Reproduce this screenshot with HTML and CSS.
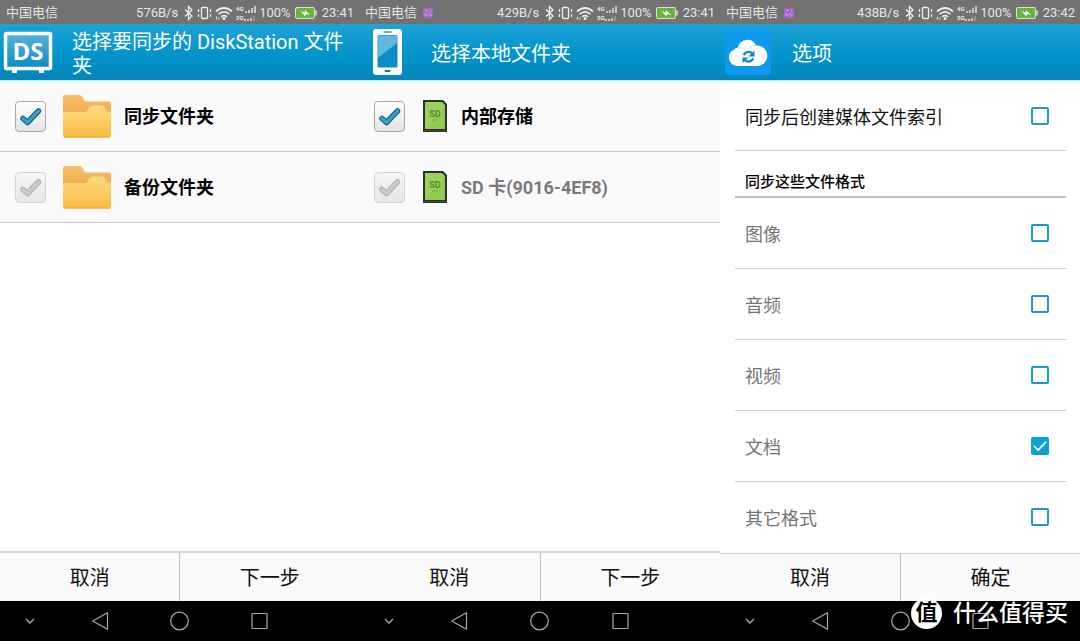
FILE: index.html
```html
<!DOCTYPE html>
<html lang="zh-CN">
<head>
<meta charset="utf-8">
<title>DS cloud</title>
<link rel="stylesheet" href="styles.css">
</head>
<body>
<svg class="defs" aria-hidden="true">
  <defs>
    <linearGradient id="folderBack" x1="0" y1="0" x2="0" y2="1"><stop offset="0" stop-color="#fbc068"/><stop offset="1" stop-color="#e9a648"/></linearGradient>
    <linearGradient id="folderFront" x1="0" y1="0" x2="0" y2="1"><stop offset="0" stop-color="#ffdb80"/><stop offset="1" stop-color="#f8bc42"/></linearGradient>
    <linearGradient id="sdFace" x1="0" y1="0" x2="0" y2="1"><stop offset="0" stop-color="#9bd063"/><stop offset="1" stop-color="#98d455"/></linearGradient>
    <linearGradient id="glass" x1="0" y1="0" x2="0" y2="1"><stop offset="0" stop-color="#5bb2dc"/><stop offset="1" stop-color="#0a8bc4"/></linearGradient>
  </defs>
  <symbol id="status" viewBox="0 0 74 20">
    <path d="M2 6.500 9 13 5.500 16.500V3.500L9 7 2 13.500" fill="none" stroke="#eee" stroke-width="1.300"/>
    <g fill="none" stroke="#eee" stroke-width="1.300"><rect x="18.500" y="4.500" width="6" height="11" rx="1"/><path d="M15.500 6v3M15.500 11v3M27.500 6v3M27.500 11v3"/></g>
    <g fill="none" stroke="#eee" stroke-width="1.700"><path d="M33 8.500Q41 1.500 49 8.500M35.500 11.200Q41 6.500 46.500 11.200M38.100 13.800Q41 11.400 43.900 13.800"/></g>
    <circle cx="41" cy="15.500" r="1.500" fill="#eee"/>
    <path d="M33.500 13.500v3M36 14.500v2" stroke="#ddd" stroke-width="1.200"/>
    <text x="53" y="8" class="tiny">4G</text><text x="53" y="17" class="tiny">2G</text>
    <path d="M63 10V8M66 10V7M69 10V5M72 10V3M62 18v-2M65 18v-2M68 18v-3" stroke="#eee" stroke-width="1.400"/>
    <path d="M71 18v-5" stroke="#aaa" stroke-width="1.200"/>
  </symbol>
  <symbol id="battery" viewBox="0 0 22 12">
    <rect x="0.500" y="0.500" width="19" height="11" rx="1.500" fill="#68b53c" stroke="#ddd"/><path d="M21 3.500v5" stroke="#ddd" stroke-width="1.500"/>
    <path d="M5.500 4 9.500 5.500 10.500 3.500 15 8 11.500 7 10 9Z" fill="#fff"/>
  </symbol>
  <symbol id="badge" viewBox="0 0 12 12">
    <rect x="1" y="1" width="10" height="10" rx="1" fill="#a766c6"/><path d="M3 9V6.500L5 8.500 9 4.500M3 3.500h3M7.500 9H9V7M8 3h1" fill="none" stroke="#dcb7ee" stroke-width="0.800"/>
  </symbol>
  <symbol id="folder" viewBox="0 0 48 44">
    <path d="M0 3Q0 1 2 1H16.500Q18 1 19 2.500L22 7.500H46Q48 7.500 48 9.500V25H0Z" fill="url(#folderBack)"/>
    <path d="M0 18H23L27 12.500Q28 11.500 29 11.500H39Q40.500 11.500 41 12.500L44 17.500H48V41Q48 43.500 46 43.500H2Q0 43.500 0 41Z" fill="url(#folderFront)"/>
    <path d="M1 43H47" stroke="#eda834" stroke-width="1"/>
  </symbol>
  <symbol id="sd" viewBox="0 0 26 44">
    <path d="M1 6H21L25 10V38H1Z" fill="#2b2e2b"/>
    <path d="M3 8H20L23 11V35H3Z" fill="url(#sdFace)"/><path d="M3 35 23 13V35Z" fill="#7fbc42" opacity=".35"/>
    <path d="M2 36.500H24" stroke="#454a45"/>
    <text x="13" y="23" class="sd-text">SD</text><path d="M10 26h6" stroke="#548a2c" stroke-dasharray="1 1"/>
  </symbol>
  <symbol id="tick-on" viewBox="0 0 31 31">
    <path d="M8 17.500 12.500 21.500 23.500 10" fill="none" stroke="#1a6385" stroke-width="5.500" stroke-linecap="round" stroke-linejoin="round"/>
    <path d="M8 17.500 12.500 21.500 23.500 10" fill="none" stroke="#38a0c8" stroke-width="3.200" stroke-linecap="round" stroke-linejoin="round"/>
  </symbol>
  <symbol id="tick-off" viewBox="0 0 31 31">
    <path d="M8 17.500 12.500 21.500 23.500 10" fill="none" stroke="#b0b0b0" stroke-width="5.500" stroke-linecap="round" stroke-linejoin="round"/>
    <path d="M8 17.500 12.500 21.500 23.500 10" fill="none" stroke="#cacaca" stroke-width="3.500" stroke-linecap="round" stroke-linejoin="round"/>
  </symbol>
  <symbol id="n-down" viewBox="0 0 20 20"><path d="M6 8 10 12 14 8" fill="none" stroke="#aaa" stroke-width="1.300"/></symbol>
  <symbol id="n-back" viewBox="0 0 20 20"><path d="M2.700 10 17.500 1.800V18.200Z" fill="none" stroke="#aaa" stroke-width="1.200" stroke-linejoin="round"/></symbol>
  <symbol id="n-home" viewBox="0 0 20 20"><circle cx="10.500" cy="10" r="8.800" fill="none" stroke="#aaa" stroke-width="1.200"/></symbol>
  <symbol id="n-app" viewBox="0 0 20 20"><rect x="3" y="2.500" width="15" height="15" rx="0.500" fill="none" stroke="#aaa" stroke-width="1.200"/></symbol>
</svg>

<main class="screens">
  <section class="screen">
    <div class="statusbar">
      <span>中国电信</span>
      <span class="speed">576B/s</span><svg class="i-status"><use href="#status"/></svg><span class="percent">100%</span><svg class="i-battery"><use href="#battery"/></svg><span>23:41</span>
    </div>
    <header class="titlebar">
      <svg class="logo" viewBox="0 0 56 48">
        <path d="M12 40h5v5h-5ZM39 40h5v5h-5Z" fill="#fff"/>
        <rect x="5.500" y="5.500" width="45" height="35" rx="1" fill="url(#glass)" stroke="#fff" stroke-width="3.500"/>
        <text x="28" y="32" class="ds-text">DS</text>
      </svg>
      <h2>选择要同步的 DiskStation 文件夹</h2>
    </header>
    <div class="content">
      <label class="folder-row"><span class="check"><input type="checkbox" checked><svg><use href="#tick-on"/></svg></span><svg class="i-folder"><use href="#folder"/></svg><span class="name">同步文件夹</span></label>
      <label class="folder-row"><span class="check"><input type="checkbox" class="muted"><svg><use href="#tick-off"/></svg></span><svg class="i-folder"><use href="#folder"/></svg><span class="name">备份文件夹</span></label>
    </div>
    <footer class="actions"><button type="button">取消</button><button type="button">下一步</button></footer>
    <nav class="navbar">
      <button type="button" aria-label="收起"><svg><use href="#n-down"/></svg></button><button type="button" aria-label="返回"><svg><use href="#n-back"/></svg></button><button type="button" aria-label="主屏幕"><svg><use href="#n-home"/></svg></button><button type="button" aria-label="最近任务"><svg><use href="#n-app"/></svg></button>
    </nav>
  </section>

  <section class="screen">
    <div class="statusbar">
      <span>中国电信</span><svg class="i-badge"><use href="#badge"/></svg>
      <span class="speed">429B/s</span><svg class="i-status"><use href="#status"/></svg><span class="percent">100%</span><svg class="i-battery"><use href="#battery"/></svg><span>23:41</span>
    </div>
    <header class="titlebar">
      <svg class="logo" viewBox="0 0 56 48">
        <rect x="14" y="1" width="29" height="46" rx="3" fill="#fff"/><rect x="18.500" y="7" width="20" height="32.500" rx="1.500" fill="#0d8dc6"/>
        <path d="M19 8.500Q19 7.500 20 7.500H37Q38 7.500 38 8.500V15L19 30Z" fill="#62b5dd"/>
        <path d="M25 4h7" stroke="#4b8ca8" stroke-width="1.500" stroke-linecap="round"/><rect x="25.500" y="42" width="6" height="2" rx="1" fill="#27738c"/>
      </svg>
      <h2>选择本地文件夹</h2>
    </header>
    <div class="content">
      <label class="folder-row"><span class="check"><input type="checkbox" checked><svg><use href="#tick-on"/></svg></span><svg class="i-sd"><use href="#sd"/></svg><span class="name">内部存储</span></label>
      <label class="folder-row"><span class="check"><input type="checkbox" class="muted"><svg><use href="#tick-off"/></svg></span><svg class="i-sd"><use href="#sd"/></svg><span class="name dim">SD 卡(9016-4EF8)</span></label>
    </div>
    <footer class="actions"><button type="button">取消</button><button type="button">下一步</button></footer>
    <nav class="navbar">
      <button type="button" aria-label="收起"><svg><use href="#n-down"/></svg></button><button type="button" aria-label="返回"><svg><use href="#n-back"/></svg></button><button type="button" aria-label="主屏幕"><svg><use href="#n-home"/></svg></button><button type="button" aria-label="最近任务"><svg><use href="#n-app"/></svg></button>
    </nav>
  </section>

  <section class="screen">
    <div class="statusbar">
      <span>中国电信</span><svg class="i-badge"><use href="#badge"/></svg>
      <span class="speed">438B/s</span><svg class="i-status"><use href="#status"/></svg><span class="percent">100%</span><svg class="i-battery"><use href="#battery"/></svg><span>23:42</span>
    </div>
    <header class="titlebar">
      <svg class="logo" viewBox="0 0 56 48">
        <rect x="5" y="2" width="46" height="45" rx="3" fill="#0c99ee"/>
        <path d="M17 38A8.500 8.500 0 0 1 13.500 22 7 7 0 0 1 18 19.500 9.500 9.500 0 0 1 36 17.500 9.500 9.500 0 0 1 38 38Z" fill="#fff"/>
        <path d="M18 20A9 9 0 0 1 26 22M29 20Q32 16.500 36.500 17.500" fill="none" stroke="#bfe4fa"/>
        <path d="M23.500 27Q28 21.500 32.500 25.500" fill="none" stroke="#0c86d0" stroke-width="2.200"/><path d="M34.500 22.500V28.500H28.500Z" fill="#0c86d0"/>
        <path d="M33.500 30.500Q29 36 24.500 32" fill="none" stroke="#0c86d0" stroke-width="2.200"/><path d="M22.500 35V29.500H28.500Z" fill="#0c86d0"/>
      </svg>
      <h2>选项</h2>
    </header>
    <div class="content options">
      <label class="option strong"><span class="name">同步后创建媒体文件索引</span><span class="box"><input type="checkbox"></span></label>
      <h3>同步这些文件格式</h3>
      <label class="option"><span class="name">图像</span><span class="box"><input type="checkbox"></span></label>
      <label class="option"><span class="name">音频</span><span class="box"><input type="checkbox"></span></label>
      <label class="option"><span class="name">视频</span><span class="box"><input type="checkbox"></span></label>
      <label class="option"><span class="name">文档</span><span class="box"><input type="checkbox" checked><svg viewBox="0 0 18 18"><path d="M3 9 7.200 13 15 4.800" fill="none" stroke="#fff" stroke-width="1.700"/></svg></span></label>
      <label class="option"><span class="name">其它格式</span><span class="box"><input type="checkbox"></span></label>
    </div>
    <footer class="actions thin"><button type="button">取消</button><button type="button">确定</button></footer>
    <nav class="navbar">
      <button type="button" aria-label="收起"><svg><use href="#n-down"/></svg></button><button type="button" aria-label="返回"><svg><use href="#n-back"/></svg></button><button type="button" aria-label="主屏幕"><svg><use href="#n-home"/></svg></button><button type="button" aria-label="最近任务"><svg><use href="#n-app"/></svg></button>
    </nav>
  </section>
</main>
<div class="watermark"><span class="seal">值</span><span>什么值得买</span></div>
</body>
</html>
```
FILE: styles.css
```css
* { box-sizing: border-box; }
body {
  margin: 0;
  position: relative;
  background: #fff;
  color: #111;
  font-family: Roboto, "Noto Sans CJK SC", sans-serif;
}
svg { display: block; flex: none; }
.defs { position: absolute; width: 0; height: 0; }
h2, h3 { margin: 0; }
button { font: inherit; color: inherit; border: 0; padding: 0; background: none; }

.screens {
  display: grid;
  grid-template-columns: 359fr 361fr 360fr;
  min-height: 100vh;
}
.screen { display: flex; flex-direction: column; min-width: 0; }

.statusbar {
  display: flex;
  align-items: center;
  height: 24px;
  padding: 2px 5px 0 6px;
  background: #727272;
  color: #e6e6e6;
  font-size: 13px;
  line-height: 22px;
  white-space: nowrap;
}
.i-badge { width: 12px; height: 12px; margin-left: 5px; }
.speed { margin-left: auto; }
.i-status { width: 74px; height: 20px; margin-left: 5px; }
.percent { margin-left: 2px; }
.i-battery { width: 22px; height: 12px; margin: 0 5px 0 4px; }
.tiny { font: bold 6px Roboto, sans-serif; fill: #eee; }

.titlebar {
  display: grid;
  grid-template-columns: 56px 1fr;
  column-gap: 16px;
  align-items: center;
  height: 57px;
  border-bottom: 1px solid #b9e5f8;
  background: linear-gradient(#1fa2d8, #0094cb 55%, #0486bb);
  color: #fff;
}
.titlebar h2 { padding-top: 4px; font-size: 20px; font-weight: 400; line-height: 24px; }
.logo { width: 56px; height: 48px; }
.ds-text { font: bold 24px "Open Sans", sans-serif; fill: #fff; text-anchor: middle; }

.content { flex: 1; }
.name { padding-top: 2px; }
.folder-row {
  display: flex;
  align-items: center;
  padding: 13px 15px;
  border-bottom: 1px solid #c8c8c8;
  background: #fafafb;
  color: #000;
  font-size: 18px;
  font-weight: 700;
  line-height: 24px;
}
.check, .box { display: grid; }
.check > *, .box > * { grid-area: 1 / 1; margin: 0; }
.check { margin-right: 17px; }
.check input {
  appearance: none;
  width: 31px;
  height: 31px;
  border: 1px solid #aaa;
  border-radius: 4px;
  background: linear-gradient(#fff, #e3e3e3);
}
.check input.muted { border-color: #d4d4d4; background: linear-gradient(#f6f6f6, #e6e6e6); }
.check svg { width: 31px; height: 31px; pointer-events: none; }
.i-folder { width: 48px; height: 44px; margin-right: 13px; }
.i-sd { width: 26px; height: 44px; margin-right: 13px; }
.sd-text { font: bold 9px Roboto, sans-serif; fill: #548a2c; text-anchor: middle; }
.dim { color: #7a7a7a; }

.options { padding: 0 14px 0 15px; }
.option {
  display: flex;
  align-items: center;
  justify-content: space-between;
  padding: 21px 17px 21px 10px;
  border-bottom: 1px solid #ccc;
  color: #757575;
  font-size: 18px;
  line-height: 24px;
}
.option .name { padding-top: 4px; }
.option:last-child { border-bottom: 0; }
.strong { padding: 21px 17px 20px 10px; color: #111; }
.options h3 {
  padding: 21px 10px 4px;
  border-bottom: 2px solid #c0c0c0;
  color: #000;
  font-size: 15px;
  font-weight: 500;
  line-height: 20px;
}
.box input {
  appearance: none;
  width: 18px;
  height: 18px;
  border: 2px solid #1a9ac9;
  border-radius: 2px;
}
.box input:checked { background: #0e9fd3; border-color: #0e9fd3; }
.box svg { width: 18px; height: 18px; pointer-events: none; }

.actions {
  display: grid;
  grid-template-columns: 181fr 179fr;
  border-top: 2px solid #d6d6d6;
  background: #fafafa;
  font-size: 20px;
  line-height: 24px;
}
.actions.thin { border-top: 1px solid #ccc; }
.actions button { padding: 13px 0 11px; }
.actions.thin button { padding: 12px 0 11px; }
.actions button:first-child { border-right: 1px solid #bbb; }

.navbar {
  display: grid;
  grid-template-columns: 60fr 80fr 80fr 80fr 60fr;
  height: 40px;
  background: #000;
}
.navbar button { display: flex; align-items: center; justify-content: center; }
.navbar svg { width: 20px; height: 20px; }

.watermark {
  position: absolute;
  right: 12px;
  bottom: 12px;
  display: flex;
  align-items: center;
  gap: 11px;
  color: #fff;
  font-size: 23px;
  font-weight: 500;
  line-height: 31px;
}
.seal {
  width: 31px;
  height: 31px;
  border-radius: 50%;
  background: #fff;
  color: #000;
  font-size: 22px;
  font-weight: 700;
  line-height: 30px;
  text-align: center;
}
```
